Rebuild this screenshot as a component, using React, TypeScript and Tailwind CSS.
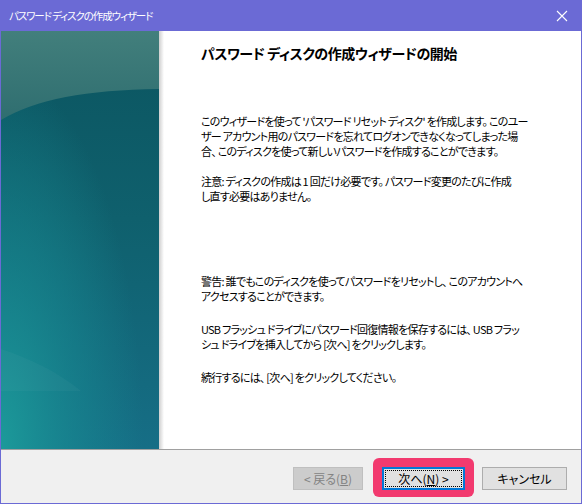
import React from 'react';

const JP = "font-['Noto_Sans_CJK_JP','Noto_Sans',sans-serif] [font-feature-settings:'palt']";

function SideArt() {
  return (
    <svg width="158" height="418" viewBox="0 0 158 418" className="block">
      <defs>
        <linearGradient id="base" x1="0" y1="0" x2="0" y2="1">
          <stop offset="0" stopColor="#0b5560" />
          <stop offset="0.45" stopColor="#0f606d" />
          <stop offset="1" stopColor="#166e86" />
        </linearGradient>
        <radialGradient id="glow" cx="0" cy="1" r="0.9" fx="0" fy="1">
          <stop offset="0" stopColor="#1c9a9a" stopOpacity="1" />
          <stop offset="0.6" stopColor="#178a92" stopOpacity="0.5" />
          <stop offset="1" stopColor="#178a92" stopOpacity="0" />
        </radialGradient>
        <linearGradient id="cap" x1="0" y1="0" x2="0" y2="1">
          <stop offset="0" stopColor="#427f7c" />
          <stop offset="1" stopColor="#2f6e70" />
        </linearGradient>
      </defs>
      <rect width="158" height="418" fill="url(#base)" />
      <rect width="158" height="418" fill="url(#glow)" />
      <path d="M0 318 C 30 328 55 340 80 360 L 0 360 Z" fill="#ffffff" opacity="0.03" />
      <path d="M0 89 C 35 68 85 59 158 58 L158 0 L0 0 Z" fill="url(#cap)" />
    </svg>
  );
}

function Para({ lines, className = '' }: { lines: string[]; className?: string }) {
  return (
    <div className={className}>
      {lines.map((l, i) => (
        <div key={i} className="whitespace-pre h-[15px] leading-[15px]">{l}</div>
      ))}
    </div>
  );
}

export default function App() {
  return (
    <div className={`w-[582px] h-[504px] flex flex-col bg-[#6b6ad5] px-px pb-px ${JP}`}>
      {/* Title bar */}
      <div className="h-[31px] flex items-center justify-between pl-[8px] pr-[9px] text-white">
        <span className="text-[10.5px] tracking-[-1.1px]">パスワード ディスクの作成ウィザード</span>
        <svg width="12" height="12" viewBox="0 0 12 12" className="mr-[4px]">
          <path d="M1 1 L11 11 M11 1 L1 11" stroke="#fff" strokeWidth="1.1" />
        </svg>
      </div>

      {/* Body */}
      <div className="h-[418px] flex bg-white">
        <SideArt />
        <div className="w-[5px] bg-gradient-to-r from-[#cfcfcf] to-white" />
        <div className="flex-1 pl-[37px] text-black">
          <div className="mt-[14px] text-[14px] font-bold leading-[17px] tracking-[-0.5px]">
            パスワード ディスクの作成ウィザードの開始
          </div>
          <div className="text-[11px] tracking-[-0.75px]">
            <Para
              className="mt-[52px]"
              lines={[
                "このウィザードを使って 'パスワード リセット ディスク' を作成します。 このユー",
                'ザー アカウント用のパスワードを忘れてログオンできなくなってしまった場',
                '合、 このディスクを使って新しいパスワードを作成することができます。',
              ]}
            />
            <Para
              className="mt-[15px]"
              lines={[
                '注意: ディスクの作成は 1 回だけ必要です。 パスワード変更のたびに作成',
                'し直す必要はありません。',
              ]}
            />
            <Para
              className="mt-[70px]"
              lines={[
                '警告: 誰でもこのディスクを使ってパスワードをリセットし、 このアカウントへ',
                'アクセスすることができます。',
              ]}
            />
            <Para
              className="mt-[18px]"
              lines={[
                'USB フラッシュ ドライブにパスワード回復情報を保存するには、 USB フラッ',
                'シュ ドライブを挿入してから [次へ] をクリックします。',
              ]}
            />
            <Para className="mt-[18px]" lines={['続行するには、 [次へ] をクリックしてください。']} />
          </div>
        </div>
      </div>

      {/* Footer */}
      <div className="h-px bg-[#a0a0a0]" />
      <div className="flex-1 bg-[#f0f0f0] flex items-start justify-end pt-[8px] pr-[14px] text-[12px]">
        <button className="mt-[9px] w-[70px] h-[23px] bg-[#cccccc] border border-[#bfbfbf] text-[#838383] leading-none">
          &lt; 戻る(<span className="underline">B</span>)
        </button>
        <div className="ml-[10px] rounded-[6px] bg-[#f23a6f] pt-[9px] pb-[7px] px-[9px]">
          <button className="w-[83px] h-[23px] bg-[#e1e1e1] border-2 border-[#0078d7] text-black leading-none p-px">
            <span className="flex items-center justify-center w-full h-full border border-dotted border-black">
              次へ(<span className="underline">N</span>) &gt;
            </span>
          </button>
        </div>
        <button className="mt-[9px] ml-[8px] w-[85px] h-[23px] bg-[#e1e1e1] border border-[#adadad] text-black leading-none">
          キャンセル
        </button>
      </div>
    </div>
  );
}
